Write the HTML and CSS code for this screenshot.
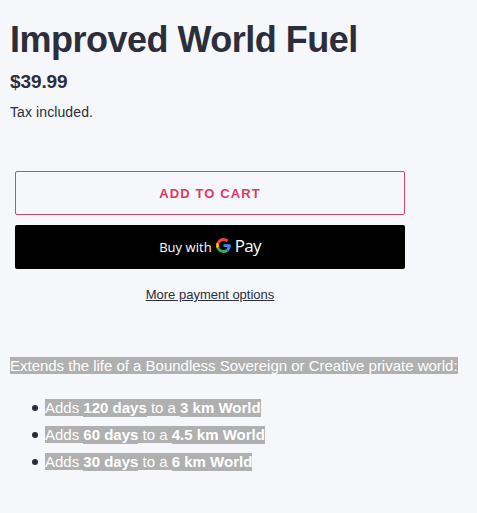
FILE: index.html
```html
<!DOCTYPE html>
<html lang="en">
<head>
<meta charset="utf-8">
<title>Improved World Fuel</title>
<link rel="stylesheet" href="styles.css">
</head>
<body>
<main class="product">
  <h1 class="title">Improved World Fuel</h1>
  <div class="price">$39.99</div>
  <div class="tax">Tax included.</div>
  <div class="actions">
    <button class="btn add">ADD TO CART</button>
    <button class="btn gpay"><span class="buy">Buy with</span>
      <svg class="g" viewBox="0 0 48 48" aria-hidden="true">
        <path fill="#ea4335" d="M24 9.5c3.54 0 6.71 1.22 9.21 3.6l6.85-6.85C35.9 2.38 30.47 0 24 0 14.62 0 6.51 5.38 2.56 13.22l7.98 6.19C12.43 13.72 17.74 9.5 24 9.5z"/>
        <path fill="#4285f4" d="M46.98 24.55c0-1.57-.15-3.09-.38-4.55H24v9.02h12.94c-.58 2.96-2.26 5.48-4.78 7.18l7.73 6c4.51-4.18 7.09-10.36 7.09-17.65z"/>
        <path fill="#fbbc05" d="M10.53 28.59A14.5 14.5 0 0 1 9.77 24c0-1.6.27-3.14.76-4.59l-7.98-6.19A24 24 0 0 0 0 24c0 3.88.92 7.54 2.56 10.78z"/>
        <path fill="#34a853" d="M24 48c6.48 0 11.93-2.13 15.89-5.81l-7.73-6c-2.15 1.45-4.92 2.3-8.16 2.3-6.26 0-11.57-4.22-13.47-9.91l-7.98 6.19C6.51 42.62 14.62 48 24 48z"/>
      </svg>
      <span class="pay">Pay</span></button>
    <a class="more">More payment options</a>
  </div>
  <div class="description">
    <p><mark>Extends the life of a Boundless Sovereign or Creative private world:</mark></p>
    <ul>
      <li><span><mark>Adds <b>120 days</b> to a <b>3 km World</b></mark></span></li>
      <li><span><mark>Adds <b>60 days</b> to a <b>4.5 km World</b></mark></span></li>
      <li><span><mark>Adds <b>30 days</b> to a <b>6 km World</b></mark></span></li>
    </ul>
  </div>
</main>
</body>
</html>
```
FILE: styles.css
```css
* { box-sizing: border-box; }
body { margin: 0; background: #f5f7fb; color: #2c2e3b; font-family: "Liberation Sans", Arial, sans-serif; }
.product { padding: 18px 10px 0; }
.title { margin: 0; font-size: 36px; line-height: 43px; font-weight: 700; letter-spacing: -0.5px; white-space: nowrap; }
.price { margin-top: 7px; font-size: 19px; line-height: 27px; font-weight: 700; letter-spacing: -0.1px; }
.tax { margin-top: 7px; font-size: 14px; line-height: 20px; letter-spacing: 0.1px; }
.actions { width: 390px; margin: 49px 0 0 5px; display: flex; flex-direction: column; align-items: center; }
.btn { width: 100%; height: 44px; padding: 0; border-radius: 2px; display: flex; align-items: center; justify-content: center; }
.add { border: 1px solid #d3466c; background: transparent; color: #dc3b5f; font: 700 13px "Liberation Sans", sans-serif; letter-spacing: 1.1px; }
.gpay { margin-top: 10px; border: 0; background: #000; color: #fff; font: 13px "Open Sans", sans-serif; }
.buy { letter-spacing: 0.05px; }
.g { width: 15px; height: 15px; margin: -3px 4px 0 4px; }
.pay { font: 400 17px "Open Sans", sans-serif; letter-spacing: -0.7px; margin-top: -3px; }
.more { margin-top: 16px; font-size: 13px; line-height: 20px; text-decoration: underline; }
.description { margin-top: 50px; font-size: 15px; line-height: 22px; }
.description p { margin: 0; white-space: nowrap; letter-spacing: -0.015px; }
.description ul { margin: 20px 0 0; padding-left: 35px; list-style: none; }
.description li { display: flex; align-items: center; height: 22px; margin-bottom: 5px; }
.description li::before { content: ""; width: 6px; height: 6px; margin: 0 7px 0 -13px; border-radius: 50%; background: #292c3a; }
mark { background: #b0b0b0; color: #fff; }
.description b { background: #b0b0b0; padding-bottom: 1px; }
```
